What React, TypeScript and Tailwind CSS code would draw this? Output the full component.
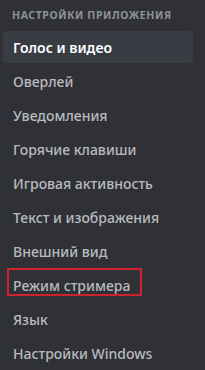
import React from 'react';

const items = [
  'Голос и видео',
  'Оверлей',
  'Уведомления',
  'Горячие клавиши',
  'Игровая активность',
  'Текст и изображения',
  'Внешний вид',
  'Режим стримера',
  'Язык',
  'Настройки Windows',
];

export default function App() {
  return (
    <div
      className="w-[205px] h-[370px] bg-[#2f3136] overflow-hidden"
      style={{ fontFamily: '"Noto Sans", "Open Sans", sans-serif' }}
    >
      <div className="h-[31px] flex items-center pl-[12px] pt-[1px] text-[10.5px] font-bold tracking-[0.6px] text-[#8e9297] uppercase">
        Настройки приложения
      </div>
      <div className="flex flex-col gap-[2px] pl-[3px]">
        {items.map((label, i) => (
          <div
            key={label}
            className={
              'relative w-[190px] h-[32px] flex items-center px-[10px] rounded-[3px] text-[14px] ' +
              (i === 0 ? 'bg-[#393c43] text-white font-semibold' : 'text-[#b9bbbe] font-medium')
            }
          >
            {label}
            {label === 'Режим стримера' && (
              <div className="absolute left-[4px] top-[-1px] w-[135px] h-[28px] border-2 border-[#d0222c]" />
            )}
          </div>
        ))}
      </div>
    </div>
  );
}
